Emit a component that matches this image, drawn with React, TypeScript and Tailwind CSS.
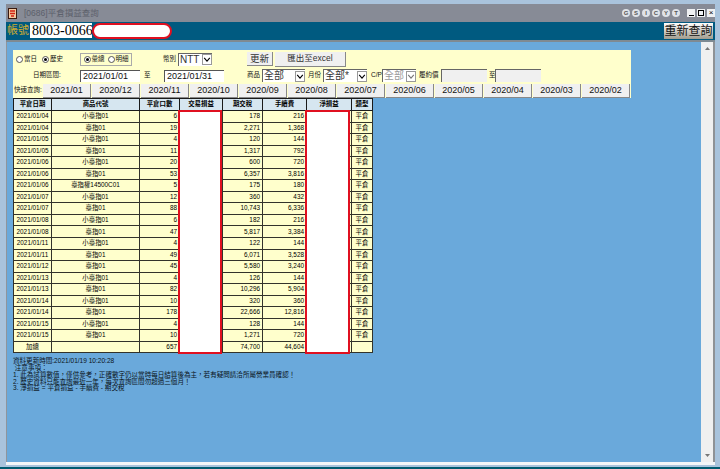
const rows: [string, string, string, string, string][] = [
  ["2021/01/04", "小臺指01", "6", "178", "216"],
  ["2021/01/04", "臺指01", "19", "2,271", "1,368"],
  ["2021/01/05", "小臺指01", "4", "120", "144"],
  ["2021/01/05", "臺指01", "11", "1,317", "792"],
  ["2021/01/06", "小臺指01", "20", "600", "720"],
  ["2021/01/06", "臺指01", "53", "6,357", "3,816"],
  ["2021/01/06", "臺指權14500C01", "5", "175", "180"],
  ["2021/01/07", "小臺指01", "12", "360", "432"],
  ["2021/01/07", "臺指01", "88", "10,743", "6,336"],
  ["2021/01/08", "小臺指01", "6", "182", "216"],
  ["2021/01/08", "臺指01", "47", "5,817", "3,384"],
  ["2021/01/11", "小臺指01", "4", "122", "144"],
  ["2021/01/11", "臺指01", "49", "6,071", "3,528"],
  ["2021/01/12", "臺指01", "45", "5,580", "3,240"],
  ["2021/01/13", "小臺指01", "4", "126", "144"],
  ["2021/01/13", "臺指01", "82", "10,296", "5,904"],
  ["2021/01/14", "小臺指01", "10", "320", "360"],
  ["2021/01/14", "臺指01", "178", "22,666", "12,816"],
  ["2021/01/15", "小臺指01", "4", "128", "144"],
  ["2021/01/15", "臺指01", "10", "1,271", "720"],
];
const months = ["2021/01","2020/12","2020/11","2020/10","2020/09","2020/08","2020/07","2020/06","2020/05","2020/04","2020/03","2020/02"];
const head = "border border-[#1a1a1a] bg-[#d6e6f0] font-bold text-center p-0 overflow-hidden";
const cell = "border border-[#33332a] px-[2px] py-0 whitespace-nowrap overflow-hidden";
const colW = ["w-[38px]","w-[88px]","w-[40px]","w-[43px]","w-[40px]","w-[44px]","w-[45px]","w-[21px]"];

function Radio({ on, label }: { on?: boolean; label: string }) {
  return (
    <span className="flex items-center gap-[1px]">
      <span className="flex h-[7px] w-[7px] items-center justify-center rounded-full border border-[#555] bg-white">
        {on && <span className="h-[3px] w-[3px] rounded-full bg-black" />}
      </span>
      <span>{label}</span>
    </span>
  );
}
function Select({ value, w, disabled }: { value: string; w: string; disabled?: boolean }) {
  return (
    <span className={`flex h-[13px] shrink-0 items-center justify-between border-l border-t border-[#666] bg-white pl-[1px] text-[10px] leading-none ${w} ${disabled ? "text-[#999]" : "text-[#333]"}`}>
      <span>{value}</span>
      <svg width="10" height="11" viewBox="0 0 10 11" className="border border-[#999]"><path d="M1.5 3.5 5 7.5 8.5 3.5" fill="none" stroke={disabled ? "#777" : "#000"} strokeWidth="1.4" /></svg>
    </span>
  );
}
function Win({ k }: { k: string }) {
  return <span className="flex h-[8px] w-[8px] items-center justify-center rounded-full bg-[#dfe3e8] text-[6px] font-bold leading-none text-[#555]">{k}</span>;
}

export default function App() {
  return (
    <div className="flex h-[469px] w-[720px] flex-col overflow-hidden bg-[#a9c3dc] font-['Liberation_Sans','Noto_Sans_CJK_TC',sans-serif] text-[6.5px] leading-none text-[#111]">
      <div className="flex min-h-0 flex-1 flex-col pl-[6px] pr-[5px] pt-[4px]">
        <div className="flex h-[18px] shrink-0 items-center bg-[#878b96] pl-[2px]">
          <svg width="9" height="11" viewBox="0 0 9 11"><rect width="9" height="11" fill="#3a1a10" /><rect x="1" y="1" width="7" height="9" fill="#f4c8a0" /><path d="M2 3h5M2 5.5h5M3 8h3" stroke="#d02010" strokeWidth="1.4" /></svg>
          <span className="ml-[7px] text-[8.5px] text-[#5c606b]">[0686]平倉損益查詢</span>
          <span className="ml-auto flex items-center gap-[2px]">
            {["G","S","I","C","Y","T"].map((k) => <Win key={k} k={k} />)}
            <span className="ml-[5px] flex h-[8px] w-[8px] items-end justify-center bg-[#eef0f2] pb-[1px]"><span className="h-[1px] w-[5px] bg-black" /></span>
            <span className="flex h-[8px] w-[8px] items-center justify-center bg-[#eef0f2]"><span className="h-[6px] w-[6px] border border-black" /></span>
            <span className="flex h-[8px] w-[8px] items-center justify-center bg-[#eef0f2] text-[8px] text-black">×</span>
          </span>
        </div>
        <div className="flex h-[20px] shrink-0 items-start border-b-2 border-[#7f8a92] bg-[#005a80] pl-[1px] pr-[2px] pt-[1px]">
          <span className="mt-[2px] w-[23px] text-[11px] text-[#d0ac2c]">帳號</span>
          <span className="flex h-[15px] w-[62px] items-center whitespace-nowrap bg-white pl-[2px] font-['Liberation_Serif','Noto_Sans_CJK_TC',serif] text-[14px] text-black">8003-0066</span>
          <span className="h-[16px] w-[80px] rounded-full border-2 border-[#e01020] bg-white" />
          <span className="ml-auto flex h-[16px] w-[49px] items-center justify-center bg-gradient-to-b from-white to-[#a09c8e] text-[12px] text-[#111]">重新查詢</span>
        </div>
        <div className="flex min-h-0 flex-1 border-l border-[#8f959c]">
          <div className="relative min-w-0 flex-1 bg-[#6aa9db] pl-[6px] pt-[8px]">
            <section className="flex h-[48px] w-[618px] flex-col bg-[#ffffcc]">
              <div className="flex h-[18px] items-center">
                <div className="ml-[3px] flex w-[64px] gap-[5px]"><Radio label="當日" /><Radio on label="歷史" /></div>
                <div className="flex h-[13px] w-[52px] items-center justify-center gap-[3px] border border-[#aaa]"><Radio on label="彙總" /><Radio label="明細" /></div>
                <span className="ml-[31px] w-[15px]">幣別</span>
                <Select value="NTT" w="w-[34px]" />
                <button className="ml-[35px] h-[14px] w-[26px] border-r border-b border-[#888] bg-[#f0f0f0] text-[9.5px] text-[#333]">更新</button>
                <button className="ml-[2px] h-[15px] w-[71px] border-r border-b border-[#888] bg-[#f0f0f0] text-[8.5px] text-[#333]">匯出至excel</button>
              </div>
              <div className="flex h-[15px] items-center">
                <span className="ml-[20px] w-[47px]">日期區間:</span>
                <span className="flex h-[12px] w-[60px] items-center border-l border-t border-[#555] bg-white pl-[2px] text-[9px]">2021/01/01</span>
                <span className="ml-[4px] w-[20px]">至</span>
                <span className="flex h-[12px] w-[60px] items-center border-l border-t border-[#555] bg-white pl-[2px] text-[9px]">2021/01/31</span>
                <span className="ml-[23px] w-[15px]">商品</span>
                <Select value="全部" w="w-[43px]" />
                <span className="ml-[3px] w-[15px]">月份</span>
                <Select value="全部*" w="w-[44px]" />
                <span className="ml-[4px] w-[11px]">C/P</span>
                <Select value="全部" w="w-[34px]" disabled />
                <span className="ml-[3px] w-[22px]">履約價</span>
                <span className="h-[13px] w-[46px] border-l border-t border-[#666] bg-[#f0f0f0]" />
                <span className="ml-[2px] w-[6px]">至</span>
                <span className="h-[13px] w-[46px] border-l border-t border-[#666] bg-[#f0f0f0]" />
              </div>
              <div className="flex h-[15px] items-center">
                <span className="w-[30px] shrink-0 whitespace-nowrap pl-[1px]">快速查詢:</span>
                <div className="flex gap-[1px]">
                  {months.map((m) => (
                    <button key={m} className="h-[14px] w-[48px] shrink-0 border-r border-b border-[#888] bg-[#f0f0f0] text-[9px] text-[#111]">{m}</button>
                  ))}
                </div>
              </div>
            </section>
            <table className="w-[359px] table-fixed border-collapse bg-[#ffffcc] text-[6.4px] leading-none text-black">
              <colgroup>
                {colW.map((c, i) => <col key={i} className={c} />)}
              </colgroup>
              <thead>
                <tr className="h-[12px]">
                  {["平倉日期","商品代號","平倉口數","交易損益","期交稅","手續費","淨損益","類型"].map((h) => <th key={h} className={head}>{h}</th>)}
                </tr>
              </thead>
              <tbody>
                {rows.map((r, i) => (
                  <tr key={i} className="h-[11.55px]">
                    <td className={`${cell} text-center`}>{r[0]}</td>
                    <td className={`${cell} text-center`}>{r[1]}</td>
                    <td className={`${cell} text-right`}>{r[2]}</td>
                    <td className={cell} />
                    <td className={`${cell} text-right`}>{r[3]}</td>
                    <td className={`${cell} text-right`}>{r[4]}</td>
                    <td className={cell} />
                    <td className={`${cell} text-center`}>平倉</td>
                  </tr>
                ))}
                <tr className="h-[11.55px]">
                  <td className={`${cell} text-center`}>加總</td>
                  <td className={cell} />
                  <td className={`${cell} text-right`}>657</td>
                  <td className={cell} />
                  <td className={`${cell} text-right`}>74,700</td>
                  <td className={`${cell} text-right`}>44,604</td>
                  <td className={cell} />
                  <td className={cell} />
                </tr>
              </tbody>
            </table>
            <span className="absolute left-[171px] top-[68px] h-[244px] w-[44px] border-2 border-[#e01020] bg-white" />
            <span className="absolute left-[298px] top-[68px] h-[244px] w-[45px] border-2 border-[#e01020] bg-white" />
            <div className="mt-[5px] text-[6.55px] leading-[6.7px] text-[#0a1420]">
              <p>資料更新時間:2021/01/19 10:20:28</p>
              <p>&nbsp;注意事項：</p>
              <p>1. 此為試算數值，僅供參考，正確數字仍以當時每日結算後為主，若有疑問請洽所屬營業員確認！</p>
              <p>2. 歷史資料只能查詢最近一年，每次查詢區間勿超過三個月！</p>
              <p>3. 淨損益 = 平倉損益 - 手續費 - 期交稅</p>
            </div>
          </div>
          <div className="flex w-[14px] flex-col items-center justify-between border-r-2 border-[#8f9296] bg-[#f0f0f0] py-[5px]">
            <svg width="5" height="3" viewBox="0 0 5 3"><path d="M0 3 2.5 0 5 3z" fill="#777" /></svg>
            <svg width="5" height="3" viewBox="0 0 5 3"><path d="M0 0 2.5 3 5 0z" fill="#777" /></svg>
          </div>
        </div>
        <div className="h-[3px] shrink-0 bg-[#f4f6f8]" />
      </div>
      <div className="h-[2px] shrink-0 bg-[#a9c3dc]" />
      <div className="h-[2px] shrink-0 bg-[#005a70]" />
    </div>
  );
}
